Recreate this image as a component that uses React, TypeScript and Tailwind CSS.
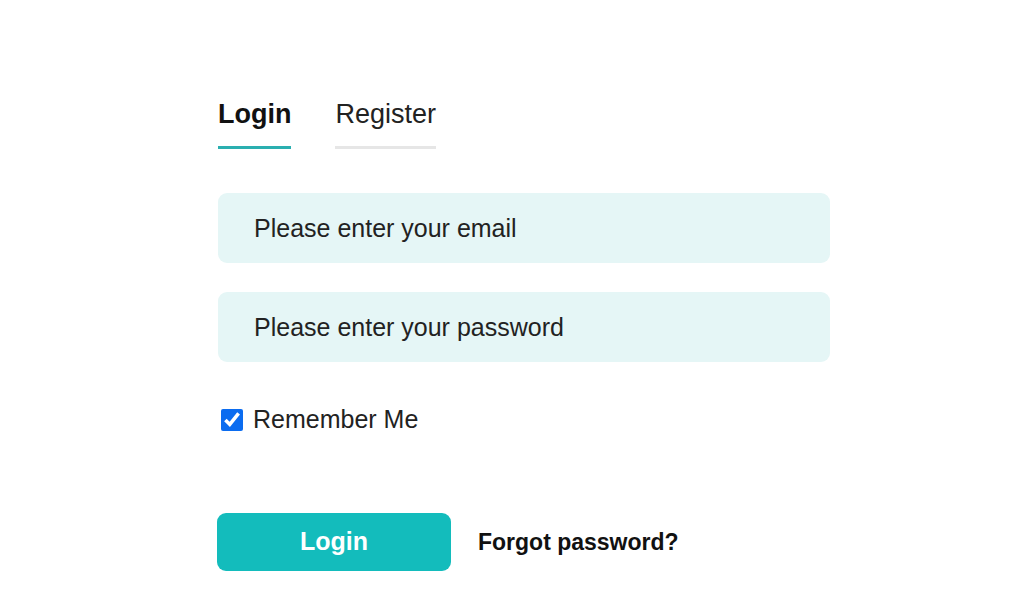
import { useState } from 'react'

const FONT = { fontFamily: '"Liberation Sans", Arial, sans-serif' }

type Tab = 'login' | 'register'

function Tabs({ tab, onChange }: { tab: Tab; onChange: (t: Tab) => void }) {
  return (
    <div className="flex gap-[44px]">
      <button
        className={`pb-[16px] border-b-[3px] text-[27px] leading-[31px] ${tab === 'login' ? 'font-bold text-[#111] border-[#2aafb0]' : 'text-[#222] border-[#e6e6e6]'}`}
        onClick={() => onChange('login')}
      >
        Login
      </button>
      <button
        className={`pb-[16px] border-b-[3px] text-[27px] leading-[31px] ${tab === 'register' ? 'font-bold text-[#111] border-[#2aafb0]' : 'text-[#222] border-[#e6e6e6]'}`}
        onClick={() => onChange('register')}
      >
        Register
      </button>
    </div>
  )
}

export default function App() {
  const [tab, setTab] = useState<Tab>('login')
  const [remember, setRemember] = useState(true)

  return (
    <div className="w-full h-[612px] bg-white overflow-hidden" style={FONT}>
      <div className="ml-[218px] pt-[99px] w-[612px]">
        <Tabs tab={tab} onChange={setTab} />

        <div className="mt-[44px] flex flex-col gap-[29px]">
          <input
            type="email"
            placeholder="Please enter your email"
            className="h-[70px] w-full rounded-[9px] bg-[#e5f6f6] px-[36px] text-[25px] text-[#222] placeholder:text-[#222] outline-none"
          />
          <input
            type="password"
            placeholder="Please enter your password"
            className="h-[70px] w-full rounded-[9px] bg-[#e5f6f6] px-[36px] text-[25px] text-[#222] placeholder:text-[#222] outline-none"
          />
        </div>

        <label className="mt-[43px] flex items-center gap-[10px] text-[25px] leading-[29px] text-[#222]">
          <input
            type="checkbox"
            checked={remember}
            onChange={(e) => setRemember(e.target.checked)}
            className="ml-[3px] w-[22px] h-[22px] accent-[#0b6cf0]"
          />
          Remember Me
        </label>

        <div className="mt-[79px] -ml-px flex items-center gap-[27px]">
          <button className="w-[234px] h-[58px] rounded-[9px] bg-[#13bcbc] text-white font-bold text-[25px]">
            Login
          </button>
          <a className="font-bold text-[23px] text-[#111]" href="#">
            Forgot password?
          </a>
        </div>
      </div>
    </div>
  )
}
